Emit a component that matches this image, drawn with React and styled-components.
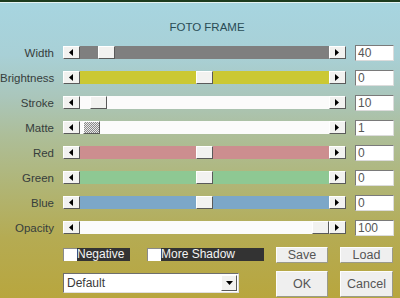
import React from 'react';
import styled, { createGlobalStyle, css } from 'styled-components';

const GlobalStyle = createGlobalStyle`
  html, body {
    margin: 0;
    padding: 0;
  }
  body {
    font-family: 'Liberation Sans', Arial, sans-serif;
  }
`;

const sliders = [
  { label: 'Width', value: 40, pos: 18, track: '#7f7f7f' },
  { label: 'Brightness', value: 0, pos: 116, track: '#cbc833' },
  { label: 'Stroke', value: 10, pos: 10, track: '#fbfbfb' },
  { label: 'Matte', value: 1, pos: 3, track: '#fbfbfb', dither: true },
  { label: 'Red', value: 0, pos: 116, track: '#cc8e8f' },
  { label: 'Green', value: 0, pos: 116, track: '#8ec893' },
  { label: 'Blue', value: 0, pos: 116, track: '#7ca7c8' },
  { label: 'Opacity', value: 100, pos: 232, track: '#fbfbfb' },
];

function Arrow({ dir }) {
  const points = dir === 'left' ? '5,0 5,7 1,3.5' : dir === 'right' ? '1,0 1,7 5,3.5' : '0,1 7,1 3.5,5';
  return (
    <svg width="7" height="7" viewBox="0 0 7 7">
      <polygon points={points} fill="#000" />
    </svg>
  );
}

function App() {
  return (
    <>
      <GlobalStyle />
      <Frame>
        <Title>FOTO FRAME</Title>
        <Rows>
          {sliders.map((s) => (
            <Row key={s.label}>
              <Label>{s.label}</Label>
              <Slider>
                <StepButton>
                  <Arrow dir="left" />
                </StepButton>
                <Track $color={s.track}>
                  <Thumb $dither={s.dither} style={{ left: s.pos }} />
                </Track>
                <StepButton>
                  <Arrow dir="right" />
                </StepButton>
              </Slider>
              <ValueBox>{s.value}</ValueBox>
            </Row>
          ))}
        </Rows>
        <Bottom>
          <LeftColumn>
            <Checks>
              <Check>
                <Box />
                <CheckLabel $width={53}>Negative</CheckLabel>
              </Check>
              <Check>
                <Box />
                <CheckLabel $width={103}>More Shadow</CheckLabel>
              </Check>
            </Checks>
            <Select>
              <span>Default</span>
              <SelectButton>
                <Arrow dir="down" />
              </SelectButton>
            </Select>
          </LeftColumn>
          <Buttons>
            <Button>Save</Button>
            <Button>Load</Button>
            <Button $tall>OK</Button>
            <Button $tall>Cancel</Button>
          </Buttons>
        </Bottom>
      </Frame>
    </>
  );
}

export default App;

const Frame = styled.div`
  width: 400px;
  height: 298px;
  box-sizing: border-box;
  overflow: hidden;
  border-top: 2px solid #1c3b1f;
  background: linear-gradient(
    to bottom,
    #e4f2f2 0px,
    #e4f2f2 1px,
    #a7d5e0 1px,
    #a8d0d6 18%,
    #aac6bb 32%,
    #adbe99 45%,
    #b0b576 62%,
    #b5ab52 80%,
    #b8a63e 100%
  );
`;

const Title = styled.div`
  height: 38px;
  box-sizing: border-box;
  padding: 18px 0 0 14px;
  text-align: center;
  font-size: 11.5px;
  line-height: 14px;
  color: #2a4c55;
`;

const Rows = styled.div`
  display: flex;
  flex-direction: column;
`;

const Row = styled.div`
  display: grid;
  grid-template-columns: 54px 283px 39px;
  column-gap: 9px;
  align-items: center;
  height: 25px;
`;

const Label = styled.div`
  text-align: right;
  font-size: 11.5px;
  color: #363d3c;
  white-space: nowrap;
`;

const Slider = styled.div`
  display: flex;
  height: 13px;
`;

const bevel = css`
  box-sizing: border-box;
  background: #f2f2f0;
  border-top: 1px solid #ffffff;
  border-left: 1px solid #ffffff;
  border-right: 1px solid #5a5a5a;
  border-bottom: 1px solid #5a5a5a;
`;

const StepButton = styled.div`
  ${bevel};
  width: 17px;
  flex: none;
  display: flex;
  align-items: center;
  justify-content: center;
`;

const Track = styled.div`
  position: relative;
  flex: 1;
  background: ${({ $color }) => $color};
`;

const Thumb = styled.div`
  ${bevel};
  position: absolute;
  top: 0;
  width: 17px;
  height: 13px;
  ${({ $dither }) =>
    $dither &&
    css`
      background: repeating-conic-gradient(#8a8a8a 0 25%, #e8e8e8 0 50%) 0 0 / 2px 2px;
    `}
`;

const ValueBox = styled.div`
  box-sizing: border-box;
  height: 16px;
  background: #fff;
  border-top: 1px solid #7a7a7a;
  border-left: 1px solid #7a7a7a;
  border-right: 1px solid #dcdcdc;
  border-bottom: 1px solid #dcdcdc;
  padding-left: 2px;
  font-size: 12px;
  line-height: 14px;
  color: #555;
`;

const Bottom = styled.div`
  display: flex;
  padding-left: 63px;
`;

const LeftColumn = styled.div`
  width: 213px;
  padding-top: 8px;
  display: flex;
  flex-direction: column;
  gap: 12px;
`;

const Checks = styled.div`
  display: flex;
  gap: 17px;
  height: 13px;
`;

const Check = styled.div`
  display: flex;
`;

const Box = styled.div`
  box-sizing: border-box;
  width: 14px;
  height: 13px;
  background: #fff;
  border-top: 1px solid #8a8a8a;
  border-left: 1px solid #8a8a8a;
`;

const CheckLabel = styled.div`
  width: ${({ $width }) => $width}px;
  height: 13px;
  background: #333333;
  color: #f4f4f4;
  font-size: 12px;
  line-height: 13px;
  white-space: nowrap;
  overflow: hidden;
`;

const Select = styled.div`
  box-sizing: border-box;
  width: 176px;
  height: 20px;
  background: #fff;
  border-top: 1px solid #6e6e6e;
  border-left: 1px solid #6e6e6e;
  border-right: 1px solid #e0e0e0;
  border-bottom: 1px solid #e0e0e0;
  display: flex;
  align-items: center;
  justify-content: space-between;
  padding: 0 1px 0 3px;
  font-size: 12px;
  color: #3a3a3a;
`;

const SelectButton = styled.div`
  ${bevel};
  width: 16px;
  height: 16px;
  display: flex;
  align-items: center;
  justify-content: center;
`;

const Buttons = styled.div`
  padding-top: 7px;
  display: grid;
  grid-template-columns: 52px 53px;
  grid-template-rows: 16px 26px;
  column-gap: 12px;
  row-gap: 8px;
`;

const Button = styled.div`
  box-sizing: border-box;
  background: #efefef;
  border-top: 1px solid #fdfdfd;
  border-left: 1px solid #fdfdfd;
  border-right: 1px solid #9a9a8a;
  border-bottom: 1px solid #9a9a8a;
  display: flex;
  align-items: center;
  justify-content: center;
  font-size: 12.5px;
  color: #555;
`;
